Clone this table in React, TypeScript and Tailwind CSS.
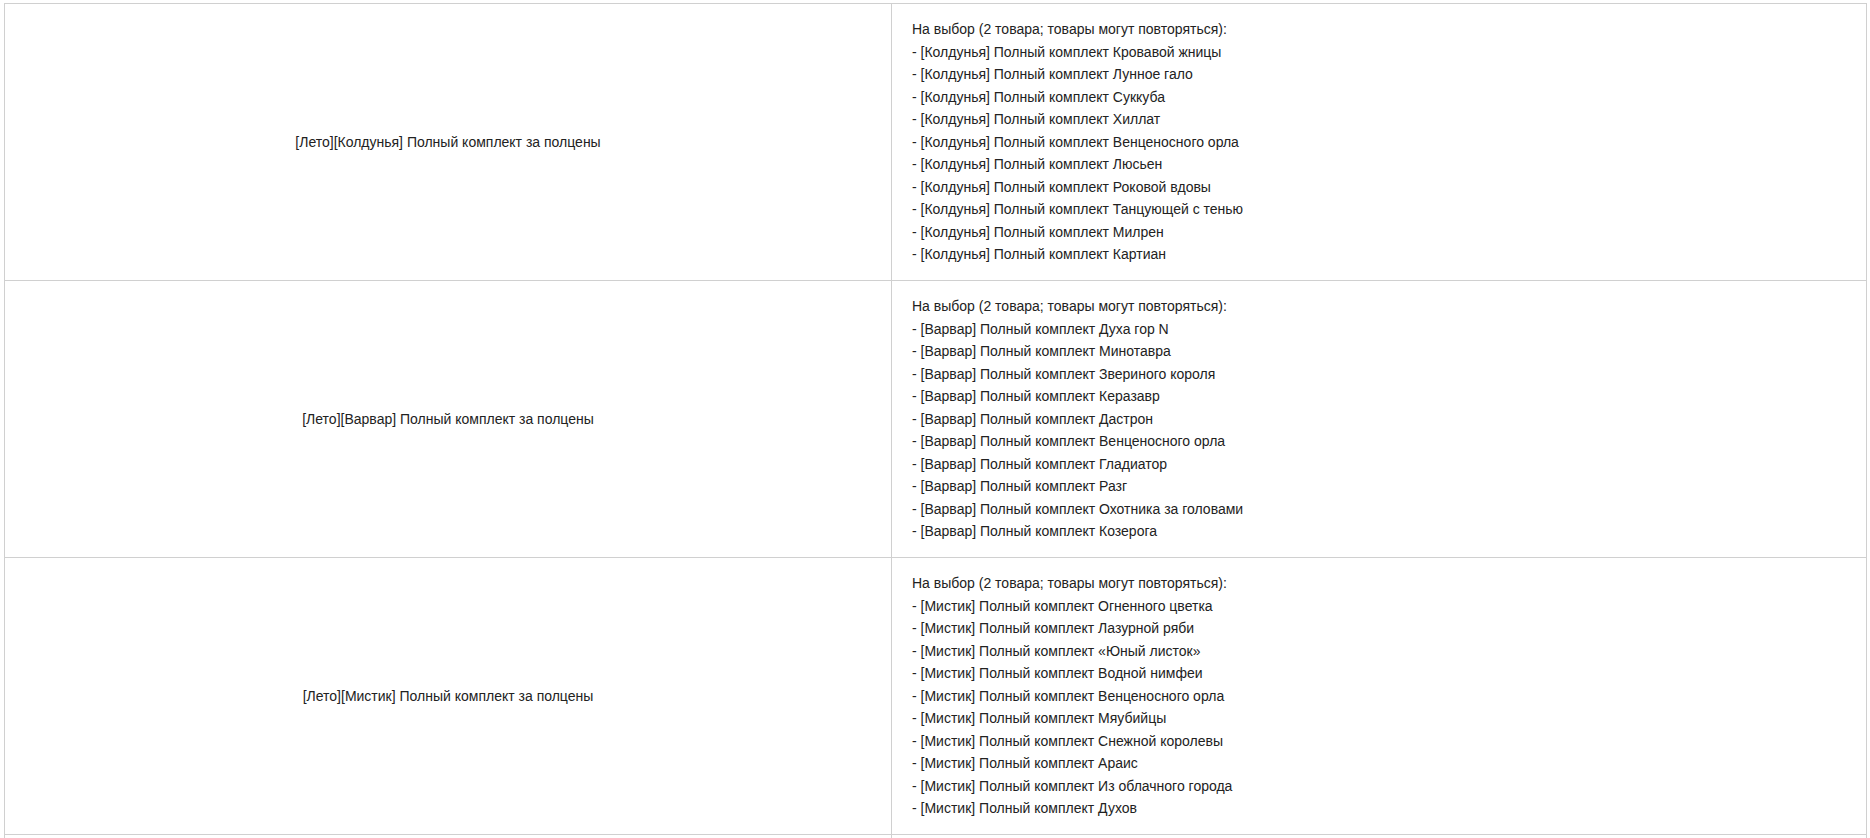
import React from 'react';

interface Offer {
  title: string;
  cls: string;
  sets: string[];
}

const offers: Offer[] = [
  {
    title: '[Лето][Колдунья] Полный комплект за полцены',
    cls: 'Колдунья',
    sets: [
      'Кровавой жницы',
      'Лунное гало',
      'Суккуба',
      'Хиллат',
      'Венценосного орла',
      'Люсьен',
      'Роковой вдовы',
      'Танцующей с тенью',
      'Милрен',
      'Картиан',
    ],
  },
  {
    title: '[Лето][Варвар] Полный комплект за полцены',
    cls: 'Варвар',
    sets: [
      'Духа гор N',
      'Минотавра',
      'Звериного короля',
      'Керазавр',
      'Дастрон',
      'Венценосного орла',
      'Гладиатор',
      'Разг',
      'Охотника за головами',
      'Козерога',
    ],
  },
  {
    title: '[Лето][Мистик] Полный комплект за полцены',
    cls: 'Мистик',
    sets: [
      'Огненного цветка',
      'Лазурной ряби',
      '«Юный листок»',
      'Водной нимфеи',
      'Венценосного орла',
      'Мяубийцы',
      'Снежной королевы',
      'Араис',
      'Из облачного города',
      'Духов',
    ],
  },
];

export default function App() {
  return (
    <div className="h-[838px] overflow-hidden bg-white pt-[3px] pl-[4px] font-['Liberation_Sans',Arial,sans-serif] text-[14px] text-[#222]">
      <div className="w-[1863px] border-t border-l border-r border-[#d0d0d0]">
        {offers.map(o => (
          <div key={o.cls} className="grid grid-cols-[887px_1fr] border-b border-[#d0d0d0]">
            <div className="flex items-center justify-center border-r border-[#d0d0d0] px-[20px]">
              {o.title}
            </div>
            <div className="px-[20px] py-[14.25px] leading-[22.5px]">
              <div>На выбор (2 товара; товары могут повторяться):</div>
              {o.sets.map(s => (
                <div key={s}>
                  - [{o.cls}] Полный комплект {s}
                </div>
              ))}
            </div>
          </div>
        ))}
        {/* next row starts just below the fold */}
        <div className="grid h-[20px] grid-cols-[887px_1fr]">
          <div className="border-r border-[#d0d0d0]" />
          <div />
        </div>
      </div>
    </div>
  );
}
